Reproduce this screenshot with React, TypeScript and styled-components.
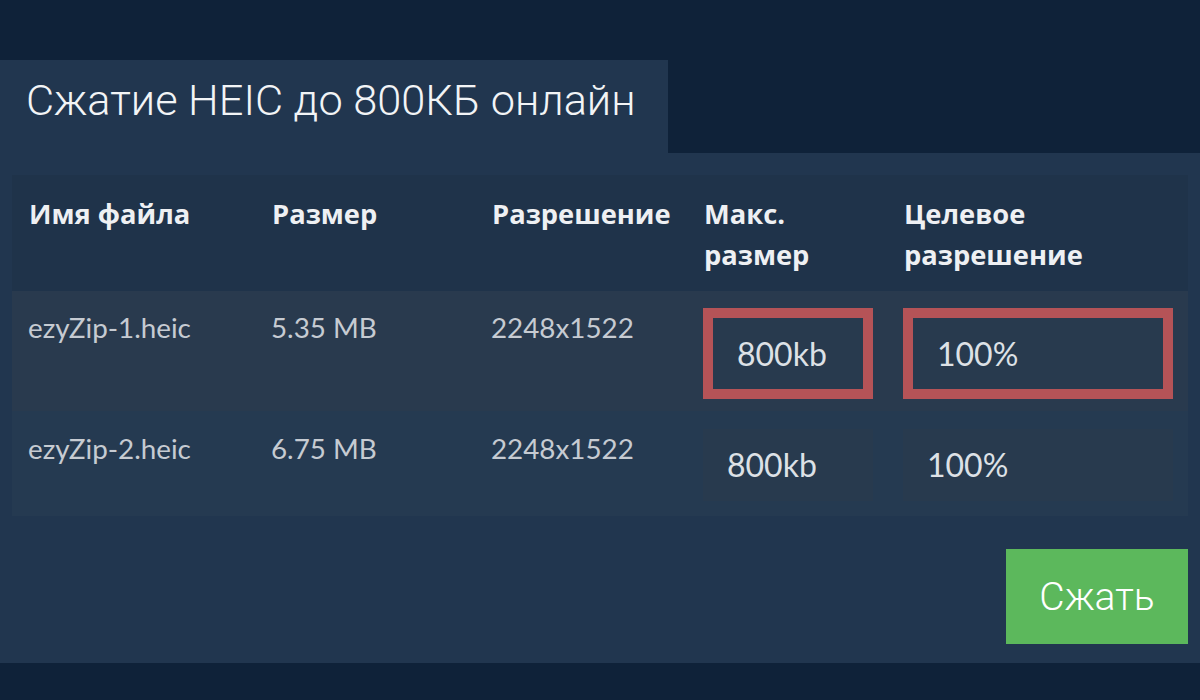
import React from "react";
import styled, { createGlobalStyle } from "styled-components";

const Global = createGlobalStyle`
  html, body { margin: 0; padding: 0; background: #0f2239; }
  body { width: 1200px; height: 700px; overflow: hidden; font-family: Lato, "Noto Sans", sans-serif; }
`;

const Page = styled.div`
  width: 1200px;
  height: 700px;
  padding-top: 60px;
  box-sizing: border-box;
  background: #0f2239;
`;

const Tab = styled.div`
  width: 668px;
  height: 93px;
  background: #21364f;
  box-sizing: border-box;
  padding: 15px 0 0 26px;
`;

const Title = styled.h1`
  margin: 0;
  font-family: Roboto, "Noto Sans", sans-serif;
  font-weight: 300;
  font-size: 43.3px;
  line-height: 52px;
  color: #f2f4f6;
  white-space: nowrap;
`;

const Panel = styled.div`
  background: #21364f;
  height: 510px;
  box-sizing: border-box;
  padding: 22px 12px 20px;
  display: flex;
  flex-direction: column;
`;

const Table = styled.div`
  display: grid;
  grid-template-columns: 243px 220px 212px 200px 301px;
  background: #1f334a;
`;

const HeadCell = styled.div`
  padding: 18px 0 16px 17px;
  font-family: "Open Sans", Lato, sans-serif;
  font-weight: 700;
  font-size: 27.3px;
  line-height: 41px;
  color: #eef0f3;
  white-space: nowrap;
`;

const Cell = styled.div<{ $bg: string; $pt: number; $pb: number }>`
  background: ${(p) => p.$bg};
  padding: ${(p) => `${p.$pt}px 0 ${p.$pb}px 16px`};
  font-size: 27.8px;
  line-height: 30px;
  color: #c6cbd2;
  white-space: nowrap;
`;

const Input = styled.div<{ $w: number; $hl: boolean }>`
  width: ${(p) => p.$w}px;
  height: ${(p) => (p.$hl ? 91 : 72)}px;
  box-sizing: border-box;
  background: #283a4e;
  border: ${(p) => (p.$hl ? "10px solid #b55357" : "none")};
  display: flex;
  align-items: center;
  padding-left: 24px;
  font-size: 32px;
  color: #dde1e6;
`;

const Footer = styled.div`
  display: flex;
  justify-content: flex-end;
  margin-top: 33px;
`;

const Button = styled.button`
  width: 182px;
  height: 95px;
  border: none;
  background: #5cb85c;
  color: #ffffff;
  font-family: Roboto, "Noto Sans", sans-serif;
  font-weight: 300;
  font-size: 39px;
  padding: 0;
`;

const rows = [
  { name: "ezyZip-1.heic", size: "5.35 MB", res: "2248x1522", bg: "#293a4e", hl: true, pt: 17, pb: 12 },
  { name: "ezyZip-2.heic", size: "6.75 MB", res: "2248x1522", bg: "#253a51", hl: false, pt: 18, pb: 15 },
];

export default function App() {
  return (
    <>
      <Global />
      <Page>
        <Tab>
          <Title>Сжатие HEIC до 800КБ онлайн</Title>
        </Tab>
        <Panel>
          <Table>
            <HeadCell>Имя файла</HeadCell>
            <HeadCell>Размер</HeadCell>
            <HeadCell>Разрешение</HeadCell>
            <HeadCell>Макс.<br />размер</HeadCell>
            <HeadCell>Целевое<br />разрешение</HeadCell>
            {rows.map((r) => (
              <React.Fragment key={r.name}>
                <Cell $bg={r.bg} $pt={r.pt + 5} $pb={r.pb}>{r.name}</Cell>
                <Cell $bg={r.bg} $pt={r.pt + 5} $pb={r.pb}>{r.size}</Cell>
                <Cell $bg={r.bg} $pt={r.pt + 5} $pb={r.pb}>{r.res}</Cell>
                <Cell $bg={r.bg} $pt={r.pt} $pb={r.pb}>
                  <Input $w={170} $hl={r.hl}>800kb</Input>
                </Cell>
                <Cell $bg={r.bg} $pt={r.pt} $pb={r.pb}>
                  <Input $w={270} $hl={r.hl}>100%</Input>
                </Cell>
              </React.Fragment>
            ))}
          </Table>
          <Footer>
            <Button>Сжать</Button>
          </Footer>
        </Panel>
      </Page>
    </>
  );
}
